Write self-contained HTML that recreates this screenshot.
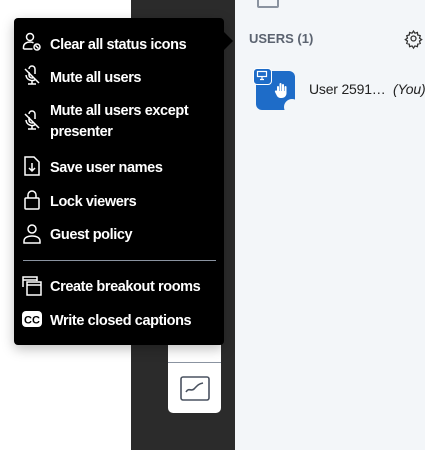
<!DOCTYPE html><html><head><style>
body{margin:0;width:425px;height:450px;position:relative;overflow:hidden;background:#fff;font-family:"Liberation Sans",sans-serif}
.dark{position:absolute;left:131px;top:0;width:104px;height:450px;background:#2b2b2b}
.panel{position:absolute;left:235px;top:0;width:190px;height:450px;background:#f3f6f9}
.tb{position:absolute;left:168px;top:300px;width:53px;height:113px;background:#fff;border-radius:0 0 5px 5px}
.menu{position:absolute;left:14px;top:18px;width:210px;height:327px;background:#000;border-radius:4px;box-shadow:0 4px 12px rgba(0,0,0,.25)}
.arrow{position:absolute;left:224px;top:32px;width:0;height:0;border-top:9px solid transparent;border-bottom:9px solid transparent;border-left:9px solid #000}
.it{position:absolute;left:36px;color:#fff;font-size:14.5px;font-weight:bold;letter-spacing:-.4px;line-height:21px}
.ic{position:absolute;left:8px}
svg{overflow:visible}
</style></head><body>
<div class="dark"></div>
<div class="panel">
<div style="position:absolute;left:22px;top:-8px;width:18px;height:12px;border:2px solid #8a93a0;border-radius:2px"></div>
<div style="position:absolute;left:14px;top:31px;font-size:13px;font-weight:bold;color:#5b6370">USERS (1)</div>
<svg style="position:absolute;left:170px;top:30px" width="17" height="17" viewBox="0 0 24 24" fill="none" stroke="#333" stroke-width="1.8"><circle cx="12" cy="12" r="3.5"/><path d="M12 1.5l2 3 3.5-1 .5 3.5 3.5 1-1 3.5 3 2-3 2 1 3.5-3.5 1-.5 3.5-3.5-1-2 3-2-3-3.5 1-.5-3.5-3.5-1 1-3.5-3-2 3-2-1-3.5 3.5-1 .5-3.5 3.5 1z"/></svg>
<div style="position:absolute;left:21px;top:71px;width:39px;height:39px;background:#1e6cc8;border-radius:6px"></div>
<div style="position:absolute;left:49px;top:99px;width:16px;height:16px;background:#f3f6f9;border-radius:50%"></div>
<div style="position:absolute;left:18px;top:68px;width:17px;height:15px;background:#1e6cc8;border:1.5px solid #fff;border-radius:4px"></div>
<svg style="position:absolute;left:22px;top:71px" width="10" height="9" viewBox="0 0 10 9" fill="none" stroke="#fff" stroke-width="1.2"><rect x="0.5" y="0.5" width="9" height="5"/><path d="M5 6v2M3 8.5h4"/></svg>
<svg style="position:absolute;left:39px;top:82px" width="14" height="17" viewBox="0 0 14 17" fill="#fff"><path d="M3 5a1 1 0 0 1 2 0v4h.5V2a1 1 0 0 1 2 0v7H8V3a1 1 0 0 1 2 0v6h.5V5a1 1 0 0 1 2 0v6c0 3-2 5-5 5s-4-1-5-3L1 10a1 1 0 0 1 2-1z"/></svg>
<div style="position:absolute;left:74px;top:81px;font-size:14px;color:#222;white-space:nowrap;letter-spacing:-.2px">User 2591… &nbsp;<i>(You)</i></div>
</div>
<div class="tb">
<div style="position:absolute;left:9px;top:28px;width:14px;height:16px;border:1.5px solid #5b6370;border-radius:50%;border-top:none"></div>
<div style="position:absolute;left:0;top:62px;width:53px;height:1px;background:#8a93a0"></div>
<svg style="position:absolute;left:12px;top:76px" width="30" height="25" viewBox="0 0 30 25" fill="none" stroke="#4a5260" stroke-width="1.6"><rect x="1" y="1" width="28" height="23" rx="2"/><path d="M6 16c3-5 5 0 8-3s4-5 9-6"/></svg>
</div>
<div class="menu">
<svg class="ic" style="top:14px" width="20" height="20" viewBox="0 0 20 20" fill="none" stroke="#fff" stroke-width="1.5"><circle cx="8" cy="5" r="3.5"/><path d="M1.5 17v-2c0-3 3-5 6.5-5 1.5 0 2.5.3 3.5.8M1.5 17h9"/><circle cx="15" cy="15" r="3"/><path d="M13.5 13.5l3 3"/></svg>
<div class="it" style="top:17px">Clear all status icons</div>
<svg class="ic" style="top:48px" width="20" height="20" viewBox="0 0 20 20" fill="none" stroke="#fff" stroke-width="1.5"><path d="M7 3a3 3 0 0 1 6 0v5M7 6v3a3 3 0 0 0 4 2.8M4 9a6 6 0 0 0 10 4M10 15v3M6 18h8M3 3l14 14"/></svg>
<div class="it" style="top:50px">Mute all users</div>
<svg class="ic" style="top:93px" width="20" height="20" viewBox="0 0 20 20" fill="none" stroke="#fff" stroke-width="1.5"><path d="M7 3a3 3 0 0 1 6 0v5M7 6v3a3 3 0 0 0 4 2.8M4 9a6 6 0 0 0 10 4M10 15v3M6 18h8M3 3l14 14"/></svg>
<div class="it" style="top:83px">Mute all users except<br>presenter</div>
<svg class="ic" style="top:138px" width="20" height="20" viewBox="0 0 20 20" fill="none" stroke="#fff" stroke-width="1.5"><path d="M3 1h9l5 5v13H3z"/><path d="M10 7v8M7 12l3 3 3-3"/></svg>
<div class="it" style="top:140px">Save user names</div>
<svg class="ic" style="top:172px" width="20" height="20" viewBox="0 0 20 20" fill="none" stroke="#fff" stroke-width="1.5"><rect x="3" y="8" width="14" height="11" rx="1"/><path d="M6 8V5a4 4 0 0 1 8 0v3"/></svg>
<div class="it" style="top:174px">Lock viewers</div>
<svg class="ic" style="top:206px" width="20" height="20" viewBox="0 0 20 20" fill="none" stroke="#fff" stroke-width="1.5"><circle cx="10" cy="5" r="4"/><path d="M2 19v-2c0-3 3-5 8-5s8 2 8 5v2z"/></svg>
<div class="it" style="top:207px">Guest policy</div>
<div style="position:absolute;left:9px;top:242px;width:193px;height:1px;background:#8a93a0"></div>
<svg class="ic" style="top:258px" width="20" height="20" viewBox="0 0 20 20" fill="none" stroke="#fff" stroke-width="1.5"><path d="M1 11V1h14v4M1 4h14"/><rect x="5" y="6" width="14" height="13"/><path d="M5 9h14"/></svg>
<div class="it" style="top:259px">Create breakout rooms</div>
<svg class="ic" style="top:293px" width="20" height="16" viewBox="0 0 20 16"><rect x="0" y="0" width="20" height="16" rx="4" fill="#fff"/><text x="10" y="12.5" text-anchor="middle" font-size="11" font-weight="bold" font-family="Liberation Sans" fill="#000">CC</text></svg>
<div class="it" style="top:293px">Write closed captions</div>
</div>
<div class="arrow"></div>
</body></html>
